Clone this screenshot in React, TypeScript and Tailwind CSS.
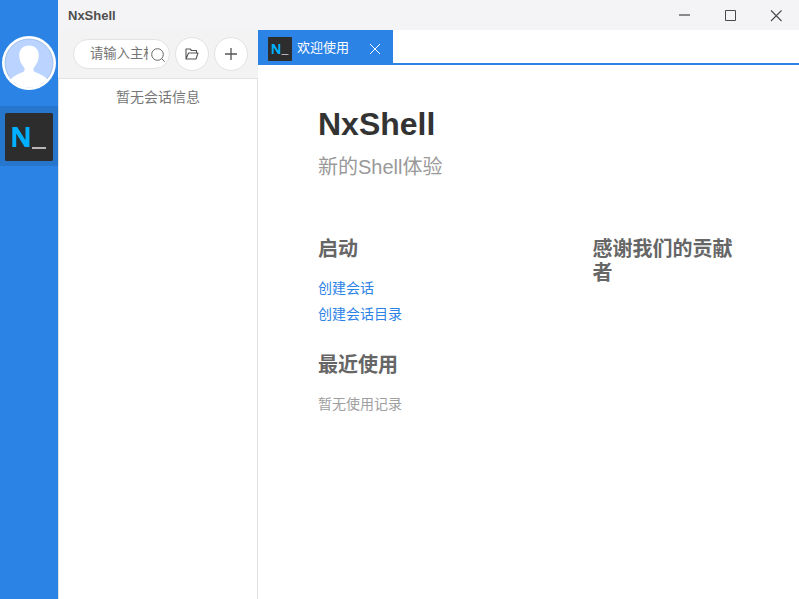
import React from "react";

function Logo({ className }: { className: string }) {
  return (
    <svg viewBox="0 0 48 48" className={className} aria-hidden="true">
      <rect width="48" height="48" rx="1.5" fill="#2d2d2d" />
      <path d="M7.300 34V14h4.900l8.300 13.300V14h3.900v20h-4.700L11.200 20.500V34z" fill="#00b0ff" />
      <path d="M27 34h14v2H27z" fill="#b8b4b8" />
    </svg>
  );
}

function Avatar() {
  return (
    <svg viewBox="0 0 54 54" className="h-[54px] w-[54px]" aria-hidden="true">
      <defs>
        <clipPath id="avatar-clip">
          <circle cx="27" cy="27" r="24.5" />
        </clipPath>
      </defs>
      <circle cx="27" cy="27" r="27" fill="#fff" />
      <circle cx="27" cy="27" r="24" fill="#bad3ff" stroke="#8fb2e0" strokeWidth=".7" />
      <path
        clipPath="url(#avatar-clip)"
        fill="#fff"
        d="M27 9.500c-6 0-9.800 4-9.800 9.800 0 4.700 1.900 8.700 4.500 11.700 1.600 2 1.300 4.200-1.200 5.300-5 2.300-9.500 3.700-12 7.200L15 54h24l6.500-10.500c-2.500-3.500-7-4.900-12-7.200-2.500-1.100-2.800-3.300-1.200-5.300 2.600-3 4.500-7 4.500-11.700 0-5.800-3.800-9.800-9.800-9.800z"
      />
    </svg>
  );
}

function Sidebar() {
  return (
    <aside className="flex w-[58px] shrink-0 flex-col items-center bg-[#2b83e6] pt-9">
      <Avatar />
      <div className="mt-4 flex h-[60px] w-full items-center justify-center bg-[#2676cd] pt-px">
        <Logo className="h-12 w-12" />
      </div>
    </aside>
  );
}

function TitleBar() {
  return (
    <header className="flex h-[30px] shrink-0 items-center justify-between bg-[#f4f4f6] pl-[10px]">
      <h1 className="pt-0.5 text-[13px] leading-[30px] font-bold text-[#4e4e4e]">NxShell</h1>
      <div className="flex text-[#4a4a4a]">
        <svg width="46" height="30" fill="none" stroke="currentColor">
          <path d="M18 15h11" stroke="#8a8a8a" strokeWidth="2" />
        </svg>
        <svg width="46" height="30" fill="none" stroke="currentColor">
          <path d="M18.500 10.500h10v10h-10z" />
        </svg>
        <svg width="46" height="30" fill="none" stroke="currentColor">
          <path d="M18 10.500l10.500 10.500M28.500 10.500L18 21" strokeWidth="1.1" />
        </svg>
      </div>
    </header>
  );
}

function RoundButton({ children }: { children: React.ReactNode }) {
  return (
    <button className="flex h-[34px] w-[34px] shrink-0 items-center justify-center rounded-full border border-[#e2e2e2] bg-white text-[#555]">
      {children}
    </button>
  );
}

function SessionPanel() {
  return (
    <section className="flex w-[200px] shrink-0 flex-col border-x border-[#e2e2e2] bg-white">
      <div className="-mx-px flex h-[49px] shrink-0 items-center gap-[5px] border-b border-[#e2e2e2] bg-[#f3f3f4] pl-[15px]">
        <div className="flex h-[30px] w-[97px] items-center rounded-full border border-[#e2e2e2] bg-white pl-4">
          <input
            placeholder="请输入主机"
            className="mb-0.5 h-5 w-[58px] bg-transparent text-[13.333px] text-[#757575] outline-none placeholder:text-[#757575]"
          />
          <svg width="16" height="16" className="mt-[3px] ml-[3px] shrink-0" fill="none" stroke="#666">
            <circle cx="6.500" cy="6.500" r="5.800" />
            <path d="M10.700 10.700l3 3" />
          </svg>
        </div>
        <RoundButton>
          <svg width="16" height="16" fill="none" stroke="currentColor" strokeWidth="1.1" strokeLinejoin="round">
            <path d="M2 13V3h4l1.500 1.500h5V7M2 13h10l2-6H4.500z" />
          </svg>
        </RoundButton>
        <RoundButton>
          <svg width="16" height="16" fill="none" stroke="currentColor" strokeWidth="1.3">
            <path d="M2 8h12M8 2v12" />
          </svg>
        </RoundButton>
      </div>
      <p className="pt-2 text-center text-sm leading-5 text-[#777]">暂无会话信息</p>
    </section>
  );
}

function Welcome() {
  return (
    <div className="flex flex-col pt-10 pl-[60px]">
      <h2 className="text-[32px] leading-[38px] font-bold text-[#333]">NxShell</h2>
      <p className="mt-[11px] text-xl leading-[26px] text-[#999]">新的Shell体验</p>
      <div className="mt-[57px] flex">
        <div className="w-[274.5px] shrink-0">
          <h3 className="text-xl leading-6 font-bold text-[#666]">启动</h3>
          <ul className="mt-[14px] text-sm leading-[26px] text-[#2b83e6]">
            <li>创建会话</li>
            <li>创建会话目录</li>
          </ul>
          <h3 className="mt-[26px] text-xl leading-6 font-bold text-[#666]">最近使用</h3>
          <p className="mt-[14px] text-sm leading-[26px] text-[#a0a0a0]">暂无使用记录</p>
        </div>
        <h3 className="w-[150px] text-xl leading-6 font-bold text-[#666]">感谢我们的贡献者</h3>
      </div>
    </div>
  );
}

export default function App() {
  return (
    <div className="flex h-screen w-screen overflow-hidden bg-white font-['Liberation_Sans','Noto_Sans_CJK_SC',sans-serif]">
      <Sidebar />
      <div className="flex min-w-0 flex-1 flex-col">
        <TitleBar />
        <div className="flex min-h-0 flex-1">
          <SessionPanel />
          <main className="min-w-0 flex-1 bg-white">
            <nav className="flex h-[35px] border-b-2 border-[#2b83e6]">
              <div className="flex h-[33px] w-[135px] items-center bg-[#2b83e6] pl-[10px] text-white">
                <Logo className="mt-[5px] h-6 w-6" />
                <span className="ml-[5px] pt-0.5 text-[13px] leading-5">欢迎使用</span>
                <svg width="12" height="12" className="mt-[5px] ml-5" fill="none" stroke="currentColor">
                  <path d="M1 1l10 10M11 1L1 11" />
                </svg>
              </div>
            </nav>
            <Welcome />
          </main>
        </div>
      </div>
    </div>
  );
}
